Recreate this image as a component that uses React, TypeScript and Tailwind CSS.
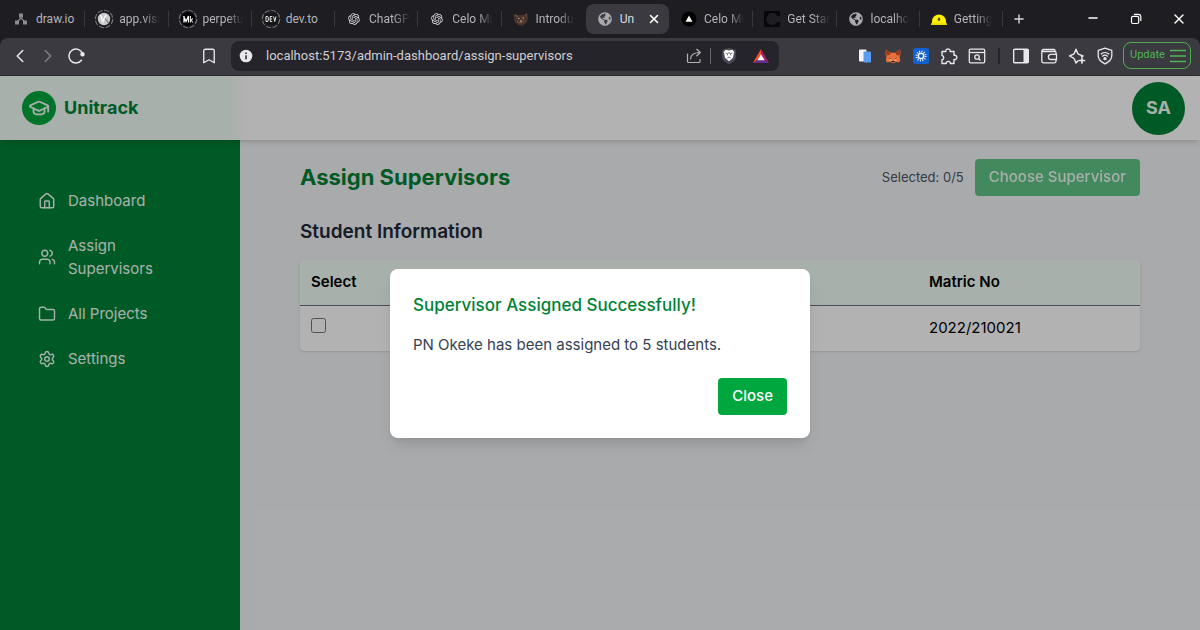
import { useState } from "react";
import type { ReactNode } from "react";
import clsx from "clsx";
import {
	Bookmark,
	ChevronLeft,
	ChevronRight,
	Folder,
	GraduationCap,
	House,
	Minus,
	Plus,
	Settings,
	Users,
	X,
} from "lucide-react";
import { FaGlobeAmericas } from "react-icons/fa";
import { RiOpenaiFill } from "react-icons/ri";

/* ---------- Favicons ---------- */

const Ring: React.FC<{ children: ReactNode }> = ({ children }) => (
	<svg viewBox="0 0 20 20" className="size-5">
		<circle
			cx="10"
			cy="10"
			r="8.7"
			fill="none"
			stroke="#77767c"
			strokeWidth="1.1"
			strokeDasharray="5.2 1.6"
		/>
		{children}
	</svg>
);

const DrawioIcon = () => (
	<svg viewBox="0 0 14 14" className="mx-[3px] size-3.5">
		<path d="M7 4v3M3 10l4-4 4 4" stroke="#8c8b90" strokeWidth="1.2" fill="none" />
		<path d="M5 1.5h4v4H5zM1 8.5h4v4H1zM9 8.5h4v4H9z" fill="#8c8b90" />
	</svg>
);

const VisiIcon = () => (
	<Ring>
		<circle cx="10" cy="10" r="6.2" fill="#c9c9cb" />
		<path d="M6.5 6 9 12.5 12 6" stroke="#f4f4f5" strokeWidth="1.8" fill="none" />
		<path d="M11 9.5 14.5 14" stroke="#77777b" strokeWidth="1.2" />
	</Ring>
);

const MediumIcon = () => (
	<Ring>
		<circle cx="10" cy="10" r="7" fill="#000" />
		<path d="M5.5 7 8 12.5 10.5 7v6.5M6 7v6.5" stroke="#fff" strokeWidth="1.3" fill="none" />
		<path d="M12.5 7v6.5M15 9.5l-2 1.5 2 2.5" stroke="#ddd" strokeWidth="1.1" fill="none" />
	</Ring>
);

const DevIcon = () => (
	<Ring>
		<rect x="3.4" y="4.6" width="13.2" height="11" rx="1.5" fill="#161618" />
		<path
			d="M5 7.5v5h1a1.3 1.3 0 0 0 1.3-1.3V8.8A1.3 1.3 0 0 0 6 7.5zM11.3 7.5H9.2v5h2.1M9.2 10h1.8M12.6 7.5l1.2 5 1.2-5"
			stroke="#e4e4e6"
			strokeWidth="1"
			fill="none"
		/>
	</Ring>
);

const OpenaiIcon = () => <RiOpenaiFill className="mx-[3px] size-3.5 text-[#dddddf]" />;

const GlobeIcon = () => <FaGlobeAmericas className="mx-[3px] size-3.5 text-[#aaa9ae]" />;

const BearIcon = () => (
	<svg viewBox="0 0 16 16" className="mx-0.5 size-4">
		<path d="M1 3 4 4h7l3-2 1 4-1 5-4 3.500H6L2 11.500 1 8z" fill="#4b342b" />
		<path d="m2 4 3 2M12 4l2-1M4 10l3 2 4-2" stroke="#7b5b4d" fill="none" />
		<path d="M5 7.5h1.5M9.5 7H11M7 10h2" stroke="#c9a590" />
	</svg>
);

const TriangleIcon = () => (
	<svg viewBox="0 0 16 16" className="mx-0.5 size-4">
		<circle cx="8" cy="8" r="7.5" fill="#000" />
		<path d="m8 4.5 3.5 6.300h-7z" fill="#fff" />
	</svg>
);

const CeloIcon = () => (
	<svg viewBox="0 0 16 16" className="mx-0.5 size-4">
		<path d="M0 0h16v5h-2.500a6 6 0 1 0 0 6H16v5H0z" fill="#070709" />
	</svg>
);

const HardhatIcon = () => (
	<svg viewBox="0 0 16 14" className="mx-0.5 size-4">
		<path d="M1 12V9.5a7 7 0 0 1 14 0V12z" fill="#fff100" />
		<path d="M0 11.2h16V13H0z" fill="#e8da00" />
		<path d="m8 5 1.5 2.600L8 9.500 6.500 7.600z" fill="#55510a" />
	</svg>
);

interface Tab {
	title: string;
	icon: ReactNode;
	faded?: boolean;
	active?: boolean;
}

const tabs: Tab[] = [
	{ title: "draw.io", icon: <DrawioIcon /> },
	{ title: "app.visi", icon: <VisiIcon />, faded: true },
	{ title: "perpetu", icon: <MediumIcon />, faded: true },
	{ title: "dev.to", icon: <DevIcon /> },
	{ title: "ChatGP", icon: <OpenaiIcon />, faded: true },
	{ title: "Celo Mi", icon: <OpenaiIcon />, faded: true },
	{ title: "Introdu", icon: <BearIcon />, faded: true },
	{ title: "Un", icon: <GlobeIcon />, active: true },
	{ title: "Celo Mi", icon: <TriangleIcon />, faded: true },
	{ title: "Get Star", icon: <CeloIcon />, faded: true },
	{ title: "localho", icon: <GlobeIcon />, faded: true },
	{ title: "Getting", icon: <HardhatIcon />, faded: true },
];

const TabStrip = () => (
	<div className="flex h-[38px] items-center bg-[#1e1d22] pl-0.5 text-[#b5b4b9]">
		<div className="flex min-w-0 flex-1 items-center" role="tablist">
			{tabs.map((tab, index) => (
				<div
					key={index}
					className={clsx(
						"flex h-[30px] min-w-0 flex-1 basis-0 items-center",
						tab.active && "mx-px rounded-lg bg-[#3b3a40] text-[#dddce0]",
					)}
				>
					<button
						role="tab"
						aria-selected={!!tab.active}
						className="flex min-w-0 flex-1 items-center gap-[5px] pl-[9px] text-left"
					>
						<span className="shrink-0">{tab.icon}</span>
						<span
							className={clsx(
								"text-xs leading-5 whitespace-nowrap",
								tab.faded && "mask-r-from-60% mask-r-to-100%",
							)}
						>
							{tab.title}
						</span>
					</button>
					{tab.active ? (
						<button aria-label="Close tab" className="px-2 text-white">
							<X className="size-3.5" strokeWidth={2.6} />
						</button>
					) : (
						<span
							className={clsx(
								"ml-1 h-4 w-px shrink-0",
								tabs[index + 1]?.active ? "bg-transparent" : "bg-[#3a393e]",
							)}
						/>
					)}
				</div>
			))}
		</div>
		<button aria-label="New tab" className="mr-9 flex w-8 justify-center text-[#d8d7dc]">
			<Plus className="size-3.5" strokeWidth={2.4} />
		</button>
		<div className="flex text-white">
			<button aria-label="Minimize" className="flex w-[43px] justify-center">
				<Minus className="size-3.5" strokeWidth={2.2} />
			</button>
			<button aria-label="Restore" className="flex w-[43px] items-center justify-center">
				<svg viewBox="0 0 12 12" className="size-3" fill="none" stroke="currentColor" strokeWidth="1.2">
					<rect x="1.5" y="3.3" width="7.2" height="7.2" rx="1.5" />
					<path d="M4 1.300h4.500a2.300 2.300 0 0 1 2.300 2.300V8" />
				</svg>
			</button>
			<button aria-label="Close window" className="flex w-[43px] justify-center">
				<X className="size-4" strokeWidth={2} />
			</button>
		</div>
	</div>
);

/* ---------- Toolbar ---------- */

const ToolButton: React.FC<{ label: string; children: ReactNode }> = ({ label, children }) => (
	<button aria-label={label} className="flex h-7 w-7 shrink-0 items-center justify-center">
		{children}
	</button>
);

const ReloadIcon = () => (
	<svg viewBox="0 0 18 18" className="size-[18px]" fill="none" stroke="currentColor" strokeWidth="1.5">
		<path d="M14.500 13.300A7 7 0 1 1 15.500 6.500" strokeLinecap="round" />
		<circle cx="15.500" cy="7.300" r="1.500" fill="currentColor" />
	</svg>
);

const ShareIcon = () => (
	<svg
		viewBox="0 0 16 16"
		className="size-4"
		fill="none"
		stroke="#b3b2b7"
		strokeWidth="1.2"
		strokeLinecap="round"
		strokeLinejoin="round"
	>
		<path d="M1.500 6v7.500a1 1 0 0 0 1 1H13a1 1 0 0 0 1-1V11.500" />
		<path d="M4.500 11c.3-4 3-6.500 9.500-6.500M10.800 1.300 14.300 4.500l-3.500 3.300" />
	</svg>
);

const BraveIcon = () => (
	<svg viewBox="0 0 16 18" className="h-[18px] w-4">
		<path d="M8 .8 14.800 3v7c0 3-2.800 5.300-6.800 7.300C4 15.300 1.200 13 1.200 10V3z" fill="#4b4b59" />
		<path d="M4.500 2.800 8 3.500l3.500-.7 1.800 2.400-.6 1.600-.7 4L8 14.300 4 10.800l-.7-4-.6-1.600z" fill="#fff" />
		<path
			d="m4.600 6 2.200.8-.6 1.600M11.400 6l-2.200.8.6 1.600M6.200 11 8 10l1.800 1M8 5v2"
			stroke="#4b4b59"
			strokeWidth=".8"
			fill="none"
		/>
	</svg>
);

const BatIcon = () => (
	<svg viewBox="0 0 18 16" className="h-4 w-[18px]">
		<path d="M9 1 .8 15 9 10.500z" fill="#ff4724" />
		<path d="m9 1 8.200 14L9 10.500z" fill="#9e1f63" />
		<path d="M.8 15h16.400L9 9.500z" fill="#662d91" />
		<path d="m9 6.200 3.600 6H5.400z" fill="#fff" />
	</svg>
);

const CopyExtensionIcon = () => (
	<svg viewBox="0 0 14 16" className="h-4 w-3.5">
		<rect x="1" y="1.500" width="7.500" height="12" rx="1" fill="#f2f4f8" />
		<rect x="5.500" y="3.500" width="7.500" height="11" rx="1" fill="#5b9bf0" />
	</svg>
);

const FoxIcon = () => (
	<svg viewBox="0 0 16 16" className="size-4">
		<path
			d="m.8 1.500 5 3.300h4.400l5-3.300.3 4.500-1 3 .8 3-1.300 2.500-3-.8L9.500 15h-3L5 13.700l-3 .8L.7 12l.8-3-1-3z"
			fill="#e8703a"
		/>
		<path d="m.8 1.500 5 3.300L4.500 7l-3.300.5zM15.200 1.500l-5 3.300L11.500 7l3.300.5z" fill="#9c3b1c" />
		<path d="m4 9.300 2 .9-.3.8zM12 9.300l-2 .9.3.8zM6.500 13h3l.3 1.200H6.200z" fill="#2b2326" />
		<path d="m5.800 10.500.8 2.300L4 13zM10.200 10.500l-.8 2.300L12 13z" fill="#f3b08b" />
	</svg>
);

const SunIcon = () => (
	<svg viewBox="0 0 16 16" className="size-4" stroke="#fff">
		<rect width="16" height="16" rx="2.500" fill="#1461d2" stroke="none" />
		<circle cx="8" cy="8" r="2.600" fill="none" strokeWidth="1.200" />
		<circle cx="8" cy="8" r="4.400" fill="none" strokeWidth="2.200" strokeDasharray=".9 1.400" />
	</svg>
);

const ExtensionsIcon = () => (
	<svg
		viewBox="0 0 18 18"
		className="size-[18px]"
		fill="none"
		stroke="currentColor"
		strokeWidth="1.400"
		strokeLinejoin="round"
	>
		<path d="M2 4.500h3.800a2.200 2.200 0 1 1 4.300 0H14v3.800a2.200 2.200 0 1 1 0 4.200V16.500h-3.600a2.100 2.100 0 0 0-4.200 0H2v-3.700a2.200 2.200 0 0 0 0-4.300z" />
	</svg>
);

const SearchTabsIcon = () => (
	<svg viewBox="0 0 18 16" className="h-4 w-[18px]" fill="none" stroke="currentColor" strokeWidth="1.3">
		<rect x="1.300" y="1.200" width="15.400" height="13.600" rx="1.200" />
		<path d="M1.500 4.500h15" />
		<circle cx="9" cy="9" r="2.200" />
		<path d="m10.700 10.700 1.800 1.800" />
	</svg>
);

const SidePanelIcon = () => (
	<svg viewBox="0 0 18 16" className="h-4 w-[18px]">
		<rect x="1.700" y="1.200" width="14.600" height="13.600" rx="1" fill="none" stroke="currentColor" strokeWidth="1.4" />
		<path d="M11.500 1.200h4.800v13.600h-4.800z" fill="currentColor" />
	</svg>
);

const WalletIcon = () => (
	<svg viewBox="0 0 18 16" className="h-4 w-[18px]" fill="none" stroke="currentColor" strokeWidth="1.3">
		<path d="M16 6V4.500a1 1 0 0 0-1-1H2M16 11.500v1.800a1.500 1.500 0 0 1-1.500 1.500h-11A1.700 1.700 0 0 1 1.800 13V3a1.500 1.500 0 0 1 1.500-1.500H14a1 1 0 0 1 1 1v1" />
		<path d="M16.500 6.300H11a2.600 2.600 0 0 0 0 5.200h5.500z" />
	</svg>
);

const LeoIcon = () => (
	<svg
		viewBox="0 0 18 18"
		className="size-[18px]"
		fill="none"
		stroke="currentColor"
		strokeWidth="1.4"
		strokeLinejoin="round"
	>
		<path d="M10.500 13.200 8 16l-1.800-4.300a1 1 0 0 0-.6-.6L1.500 9l4.100-1.800a1 1 0 0 0 .6-.6L8 2.200l1.800 4.400a1 1 0 0 0 .6.6L15 9l-2 1" />
		<path d="M14 11v5M11.500 13.500h5" strokeWidth="1.700" strokeLinecap="round" />
	</svg>
);

const VpnIcon = () => (
	<svg viewBox="0 0 18 18" className="size-[18px]" fill="none" stroke="currentColor" strokeWidth="1.3">
		<path d="M9 1.200 15.800 3.300v5.400c0 3.600-2.500 6-6.800 8.100-4.300-2.100-6.800-4.500-6.800-8.100V3.300z" strokeLinejoin="round" />
		<path d="M4.800 7.300a6.300 6.300 0 0 1 8.400 0M6.300 9.400a4 4 0 0 1 5.400 0" />
		<circle cx="9" cy="11.700" r="1" fill="currentColor" />
	</svg>
);

const Toolbar = () => (
	<div className="bg-[#1e1d22]">
		<div className="flex h-[38px] items-center rounded-t-lg border-b border-[#2c2b30] bg-[#3b3a40] pb-0.5 text-[#e8e7ec]">
			<div className="flex w-[231px] items-center pr-2 pl-1.5">
				<ToolButton label="Back">
					<ChevronLeft className="size-[22px]" strokeWidth={1.7} />
				</ToolButton>
				<ToolButton label="Forward">
					<ChevronRight className="size-[22px] text-[#7f7e84]" strokeWidth={1.7} />
				</ToolButton>
				<ToolButton label="Reload">
					<ReloadIcon />
				</ToolButton>
				<span className="flex-1" />
				<ToolButton label="Bookmark">
					<Bookmark className="size-[18px]" strokeWidth={1.8} />
				</ToolButton>
			</div>
			<div className="flex h-[30px] min-w-0 flex-1 items-center rounded-lg bg-[#25242a] pr-1 pl-2">
				<svg viewBox="0 0 14 14" className="size-3.5 shrink-0">
					<circle cx="7" cy="7" r="6.300" fill="#e8e7ec" />
					<path d="M7 6.200v4M7 3.600v1.500" stroke="#25242a" strokeWidth="1.5" />
				</svg>
				<input
					aria-label="Address"
					readOnly
					value="localhost:5173/admin-dashboard/assign-supervisors"
					className="ml-[13px] min-w-0 flex-1 bg-transparent text-[13px] text-[#cfced3] outline-none"
				/>
				<ToolButton label="Share">
					<ShareIcon />
				</ToolButton>
				<span className="mr-1 ml-0.5 h-4 w-px bg-[#67666c]" />
				<ToolButton label="Shields">
					<BraveIcon />
				</ToolButton>
				<span className="w-1" />
				<ToolButton label="Rewards">
					<BatIcon />
				</ToolButton>
			</div>
			<div className="flex w-[421px] items-center justify-end pr-[9px]">
				<ToolButton label="Copy extension">
					<CopyExtensionIcon />
				</ToolButton>
				<ToolButton label="Fox wallet">
					<FoxIcon />
				</ToolButton>
				<ToolButton label="Sun extension">
					<SunIcon />
				</ToolButton>
				<ToolButton label="Extensions">
					<ExtensionsIcon />
				</ToolButton>
				<ToolButton label="Search tabs">
					<SearchTabsIcon />
				</ToolButton>
				<span className="mx-[7px] h-4 w-0.5 bg-[#252429]" />
				<ToolButton label="Side panel">
					<SidePanelIcon />
				</ToolButton>
				<ToolButton label="Wallet">
					<WalletIcon />
				</ToolButton>
				<ToolButton label="Assistant">
					<LeoIcon />
				</ToolButton>
				<ToolButton label="VPN">
					<VpnIcon />
				</ToolButton>
				<button className="ml-1 flex h-[27px] w-[68px] items-center justify-between rounded-lg border border-[#4fae50] px-1 pl-1.5 text-[11px] text-[#4fb552]">
					Update
					<svg viewBox="0 0 16 14" className="h-3.5 w-4" stroke="currentColor" strokeWidth="1.3">
						<path d="M0 1.500h16M0 7h16M0 12.500h16" />
					</svg>
				</button>
			</div>
		</div>
	</div>
);

/* ---------- Dashboard ---------- */

const menuList = [
	{ name: "Dashboard", path: "/admin-dashboard", icon: House },
	{ name: "Assign Supervisors", path: "/admin-dashboard/assign-supervisors", icon: Users },
	{ name: "All Projects", path: "/admin-dashboard/projects", icon: Folder },
	{ name: "Settings", path: "/admin-dashboard/settings", icon: Settings },
];

const Header = () => (
	<header className="relative flex h-16 shrink-0 items-center justify-between bg-white pr-[15px] shadow-md">
		<div className="flex h-full items-center">
			<a href="/" className="flex h-full w-[228px] items-center gap-2 bg-green-50 pl-[22px]">
				<span className="flex size-[34px] items-center justify-center rounded-full bg-green-600 text-green-50">
					<GraduationCap className="size-[22px]" />
				</span>
				<span className="text-lg font-bold text-green-700">Unitrack</span>
			</a>
			<span className="h-full w-5 bg-linear-to-r from-green-50 to-white" />
		</div>
		<button className="size-[53px] rounded-full bg-green-700 text-lg font-bold text-green-50">SA</button>
	</header>
);

const Sidebar = () => (
	<aside className="w-60 shrink-0 bg-green-700 pt-[49px] pr-16 pl-[38px]">
		<nav>
			<ul className="flex flex-col gap-[22px]">
				{menuList.map(({ name, path, icon: Icon }) => (
					<li key={name}>
						<a href={path} className="flex items-center gap-3 text-[15px] leading-[23px] text-green-50">
							<Icon className="size-[18px] shrink-0" strokeWidth={1.9} />
							{name}
						</a>
					</li>
				))}
			</ul>
		</nav>
	</aside>
);

const StudentTable = () => (
	<table className="w-full table-fixed overflow-hidden rounded bg-white text-left text-[15px] shadow-sm">
		<thead className="bg-green-50">
			<tr className="h-[45px]">
				<th className="w-[100px] px-[11px] font-semibold">Select</th>
				<td />
				<th className="w-[222px] px-[11px] font-semibold">Matric No</th>
			</tr>
		</thead>
		<tbody>
			<tr className="h-[46px] border-t border-gray-500">
				<td className="px-[11px]">
					<input
						type="checkbox"
						aria-label="Select 2022/210021"
						className="mb-1.5 block size-[15px]"
					/>
				</td>
				<td />
				<td className="px-[11px]">2022/210021</td>
			</tr>
		</tbody>
	</table>
);

const SuccessModal: React.FC<{ onClose: () => void }> = ({ onClose }) => (
	<div className="absolute inset-0 flex items-center justify-center bg-black/30">
		<div
			role="dialog"
			aria-labelledby="success-title"
			className="w-full max-w-[420px] rounded-lg bg-white p-[23px] shadow-lg"
		>
			<h2 id="success-title" className="mb-[15px] text-[17px] leading-[26px] font-medium text-green-700">
				Supervisor Assigned Successfully!
			</h2>
			<p className="mb-[22px] text-[15px] leading-[23px] text-gray-700">
				PN Okeke has been assigned to 5 students.
			</p>
			<div className="flex justify-end">
				<button
					onClick={onClose}
					className="h-[37px] rounded bg-green-600 px-3.5 text-[15px] font-medium text-white"
				>
					Close
				</button>
			</div>
		</div>
	</div>
);

export default function App() {
	const [modalOpen, setModalOpen] = useState<boolean>(true);

	return (
		<div className="flex min-h-screen flex-col font-['Inter',sans-serif]">
			<div className="font-['Roboto','Noto_Sans',sans-serif]">
				<TabStrip />
				<Toolbar />
			</div>
			<div className="relative flex flex-1 flex-col bg-gray-100">
				<Header />
				<div className="flex flex-1">
					<Sidebar />
					<main className="min-w-0 flex-1 px-[60px] pt-[19px]">
						<div className="flex items-center justify-between">
							<h1 className="text-[22px] font-bold text-green-700">Assign Supervisors</h1>
							<div className="flex items-center gap-[11px]">
								<span className="text-[13px] text-gray-600">Selected: 0/5</span>
								<button
									disabled
									className="h-[37px] rounded bg-green-600 px-3.5 text-[15px] font-medium text-green-50 opacity-60"
								>
									Choose Supervisor
								</button>
							</div>
						</div>
						<h2 className="mt-[22px] mb-[15px] text-[19px] leading-[27px] font-semibold text-gray-800">
							Student Information
						</h2>
						<StudentTable />
					</main>
				</div>
				{modalOpen && <SuccessModal onClose={() => setModalOpen(false)} />}
			</div>
		</div>
	);
}
